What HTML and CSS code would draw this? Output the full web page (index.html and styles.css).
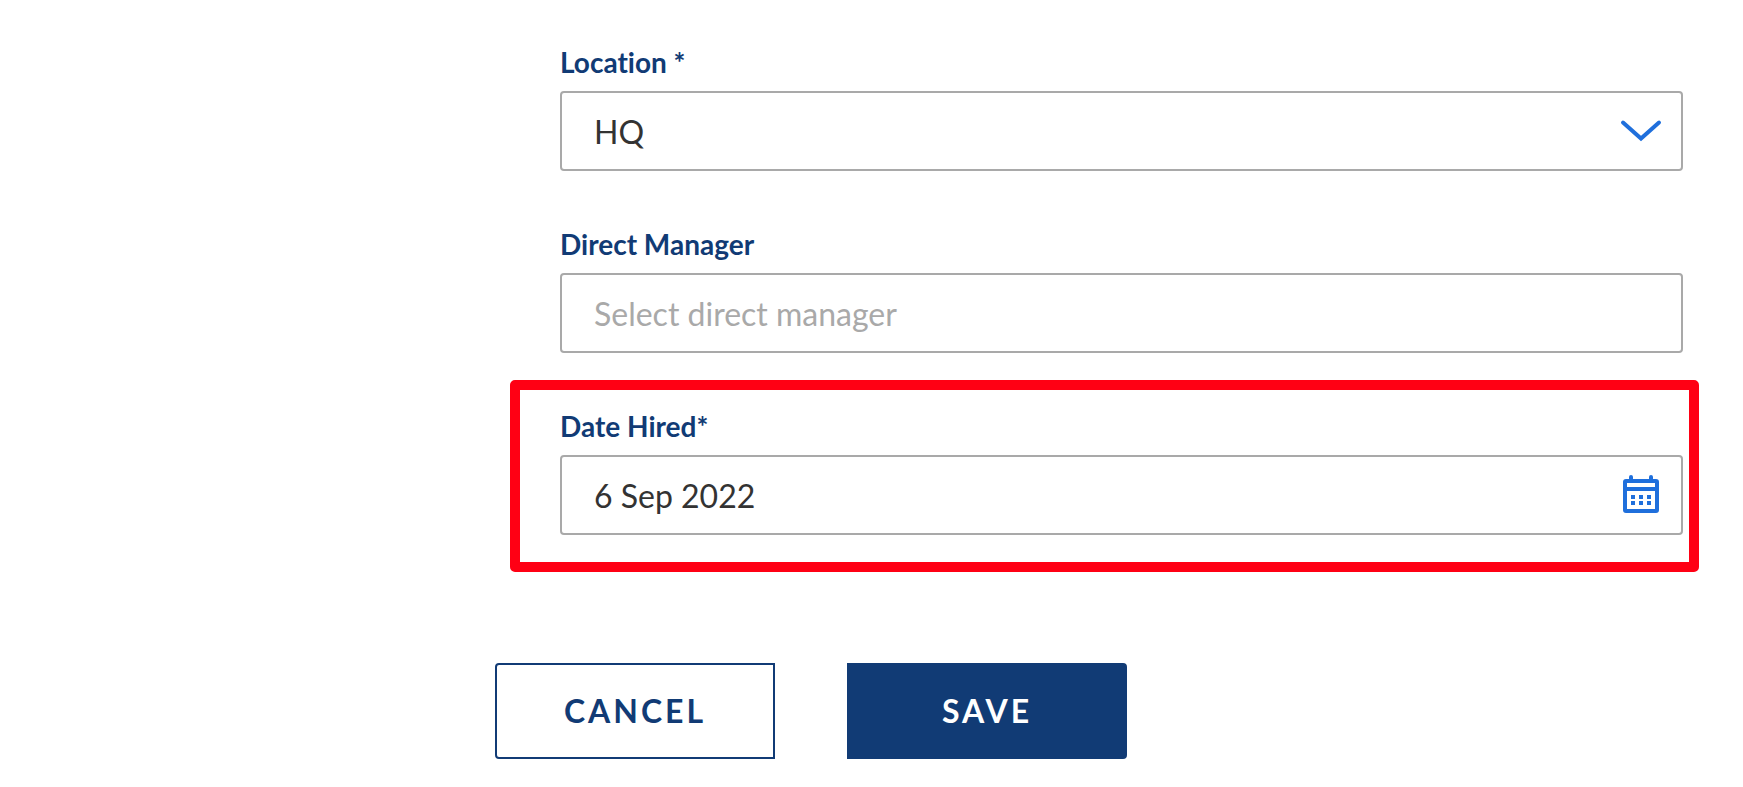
FILE: index.html
```
<!DOCTYPE html>
<html lang="en">
<head>
<meta charset="utf-8">
<meta name="viewport" content="width=device-width, initial-scale=1">
<title>Employee details</title>
<link rel="stylesheet" href="styles.css">
</head>
<body>
<form class="form">
  <div class="fields">
    <div class="field">
      <label class="label" for="location">Location *</label>
      <div class="control">
        <select class="input" id="location" required>
          <option>HQ</option>
        </select>
        <svg class="icon" viewBox="0 0 40 40" aria-hidden="true">
          <path d="M2 11.500 20 27.500 38 11.500" fill="none" stroke="currentColor" stroke-width="4" stroke-linecap="round" stroke-linejoin="miter"/>
        </svg>
      </div>
    </div>
    <div class="field">
      <label class="label" for="manager">Direct Manager</label>
      <div class="control">
        <input class="input" id="manager" type="text" placeholder="Select direct manager">
      </div>
    </div>
    <div class="field field-highlight">
      <label class="label" for="hired">Date Hired*</label>
      <div class="control">
        <input class="input" id="hired" type="text" value="6 Sep 2022" required>
        <svg class="icon" viewBox="0 0 40 40" aria-hidden="true">
          <path fill="currentColor" fill-rule="evenodd" d="M5 4H35A3 3 0 0 1 38 7V35A3 3 0 0 1 35 38H5A3 3 0 0 1 2 35V7A3 3 0 0 1 5 4ZM6 8V12H34V8ZM6 16V34H34V16Z"/>
          <path stroke="currentColor" stroke-width="4" stroke-linecap="round" d="M10 2V6M30 2V6"/>
          <path fill="currentColor" d="M10 20h4v4h-4zM18 20h4v4h-4zM26 20h4v4h-4zM10 26h4v4h-4zM18 26h4v4h-4zM26 26h4v4h-4z"/>
        </svg>
      </div>
    </div>
  </div>
  <div class="actions">
    <button class="button button-cancel" type="button">CANCEL</button>
    <button class="button button-save" type="submit">SAVE</button>
  </div>
</form>
</body>
</html>
```

FILE: styles.css
```
* {
  box-sizing: border-box;
}

body {
  margin: 0;
  background: #fff;
  font-family: Lato, "Liberation Sans", sans-serif;
  font-variant-ligatures: none;
  color: #333;
}

.form {
  padding: 45px 60px 28px 495px;
}

.fields {
  display: flex;
  flex-direction: column;
  gap: 56px;
  padding-left: 65px;
}

.field {
  position: relative;
  display: flex;
  flex-direction: column;
  gap: 12px;
}

.label {
  font-size: 28px;
  line-height: 34px;
  font-weight: 700;
  color: #113b75;
}

.control {
  display: grid;
  align-items: center;
}

.input {
  grid-area: 1 / 1;
  width: 100%;
  height: 80px;
  margin: 0;
  padding: 0 80px 0 32px;
  border: 2px solid #a9a9a9;
  border-radius: 4px;
  background: #fff;
  appearance: none;
  font: inherit;
  font-size: 32px;
  color: #333;
  box-shadow: none;
}

.input::placeholder {
  color: #a9a9a9;
  opacity: 1;
}

.icon {
  grid-area: 1 / 1;
  justify-self: end;
  width: 40px;
  height: 40px;
  margin-right: 22px;
  color: #1f6fdc;
  pointer-events: none;
  overflow: visible;
  z-index: 1;
}

.field-highlight::after {
  content: "";
  position: absolute;
  inset: -29px -16px -37px -50px;
  border: 10px solid #ff0014;
  border-radius: 5px;
  pointer-events: none;
}

.actions {
  display: flex;
  gap: 72px;
  margin-top: 128px;
}

.button {
  width: 280px;
  height: 96px;
  padding: 0 0 2px;
  border: 2px solid #113b75;
  font: inherit;
  font-size: 32px;
  font-weight: 700;
  letter-spacing: 3px;
}

.button-cancel {
  border-radius: 4px 0 0 4px;
  background: #fff;
  color: #113b75;
}

.button-save {
  border-radius: 0 4px 4px 0;
  background: #113b75;
  color: #fff;
}
```
